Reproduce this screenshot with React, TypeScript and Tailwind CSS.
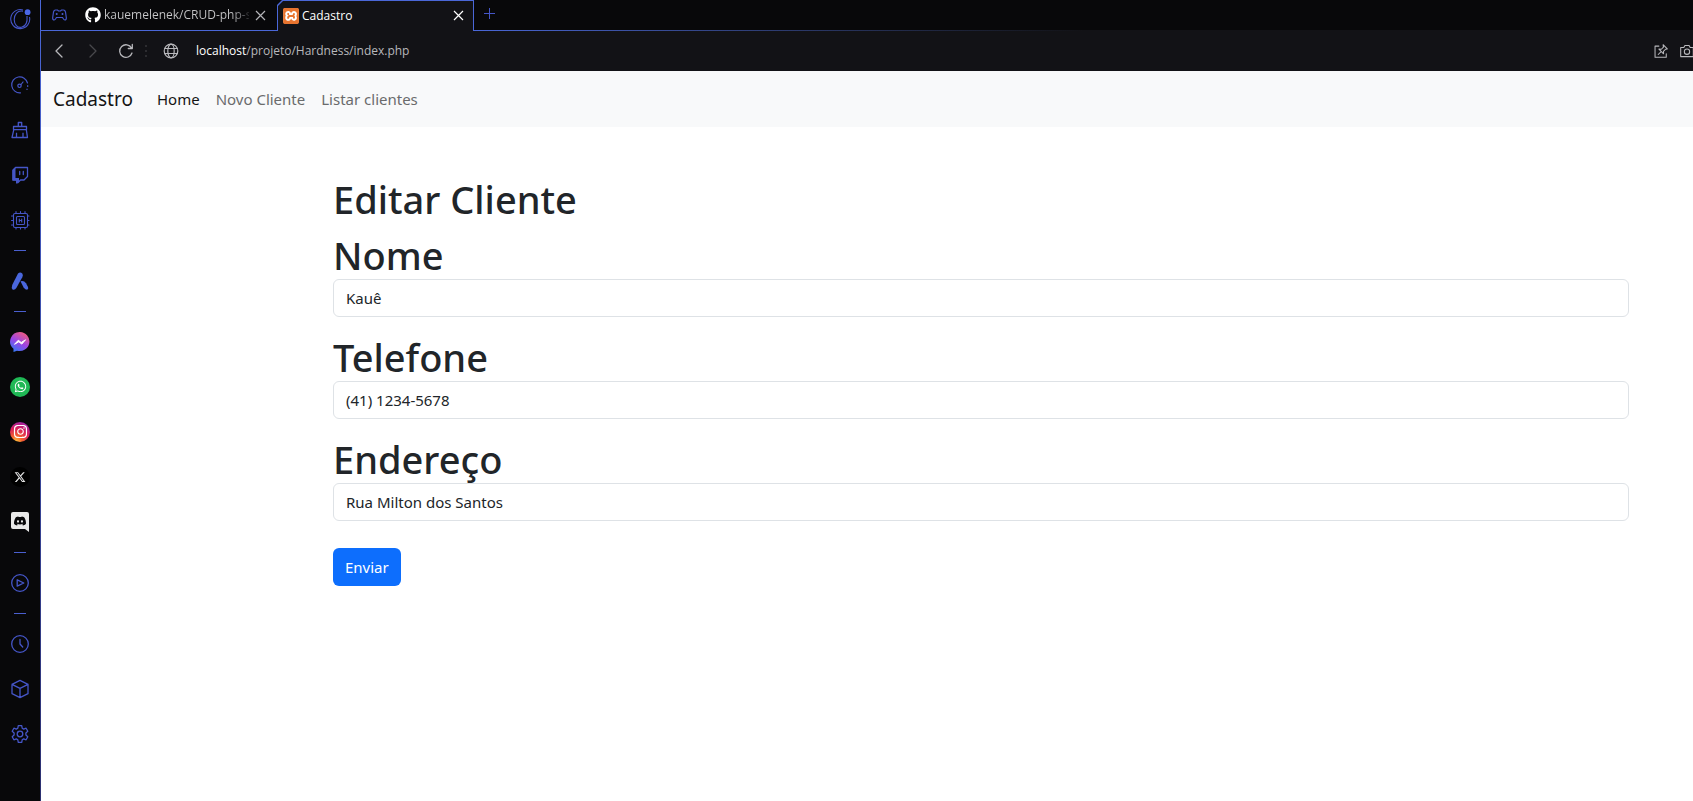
import type { ReactNode } from "react";
import { FaGithub, FaInstagram, FaWhatsapp, FaXTwitter, FaDiscord } from "react-icons/fa6";
import { SiXampp } from "react-icons/si";

function Line({ size = 20, width = 1.3, children }: { size?: number; width?: number; children: ReactNode }) {
  return (
    <svg
      width={size}
      height={size}
      viewBox="0 0 20 20"
      fill="none"
      stroke="currentColor"
      strokeWidth={width}
      strokeLinecap="round"
      strokeLinejoin="round"
      aria-hidden="true"
    >
      {children}
    </svg>
  );
}

function SideItem({ label, children }: { label: string; children: ReactNode }) {
  return (
    <button type="button" aria-label={label} className="flex h-[45px] w-full items-center justify-center">
      {children}
    </button>
  );
}

function Separator() {
  return (
    <div className="flex h-4 w-full items-center justify-center">
      <div className="h-px w-3 bg-[#4a5fd0]" />
    </div>
  );
}

function OperaLogo() {
  return (
    <svg width="22" height="22" viewBox="0 0 22 22" fill="none" stroke="currentColor" strokeWidth="1.100" aria-hidden="true">
      <path d="M14 2A9.500 9.500 0 1 0 20.500 9" />
      <path d="M14 3.200C8.500 2 5.200 6.500 5.200 11.500s3.300 8.500 7.300 7.700c5-1 6-6.200 5.500-11.200" />
      <circle cx="18.600" cy="4.200" r="2.900" fill="#4a67e8" stroke="none" />
    </svg>
  );
}

function Sidebar() {
  return (
    <aside className="flex w-10 shrink-0 flex-col items-center bg-[#08080a] text-[#4556c8]">
      <div className="flex h-[62px] w-full justify-center pt-2">
        <OperaLogo />
      </div>
      <SideItem label="GX Control">
        <Line width={1.2}>
          <path d="M10.500 17.800A8 8 0 1 1 17.500 8M17.700 10.500v1M17 14v.5" />
          <circle cx="9.500" cy="10.800" r="1.700" />
          <path d="m11 9.500 2-2.500" />
        </Line>
      </SideItem>
      <SideItem label="GX Cleaner">
        <Line>
          <path d="M8.300 6.500V2.500h3.400v4M3.500 6.500h13v3.200h-13zM3.800 9.700 2 17.500h15.500l-1.200-7.800M6.500 13.500v4M13 13.500v4" strokeLinecap="square" />
        </Line>
      </SideItem>
      <SideItem label="Twitch">
        <Line>
          <path d="M5.500 2.500h12v9L14 15h-3.500L8 17.500V15H3V5z" />
          <path d="M2.400 5.200 5.500 2.500v10.500h3.500V16l-1.500 2.500H6V15.500H2.400z" fill="currentColor" stroke="none" />
          <path d="M9.700 6.500v3M13.300 6.500v3" />
        </Line>
      </SideItem>
      <SideItem label="Monitor">
        <Line width={1.1}>
          <rect x="3.500" y="3.500" width="14" height="14" rx="1.500" />
          <rect x="6.500" y="6.500" width="8" height="8" rx="1" />
          <path d="M9.300 9v3M11.700 9v3M9.300 10.500h2.400M6 1.500v2M10.500 1.500v2M15 1.500v2M6 17.500v1.500M10.500 17.500v1.500M15 17.500v1.500M1.500 6h2M1.500 10.500h2M1.500 15h2M17.500 6h1.500M17.500 10.500h1.500M17.500 15h1.500" />
        </Line>
      </SideItem>
      <Separator />
      <SideItem label="Aria">
        <svg width="20" height="20" viewBox="0 0 20 20" fill="#4a67dd" aria-hidden="true">
          <path d="M8 2.500Q10.200.6 12.300 2.500 13.500 4 12.300 6.200L6.300 17Q5 19.300 2.500 18.500 1.200 17 2.200 14z" />
          <path d="M10.500 10.300q3.500-1 5.500 2l2 3.800q.8 2-.9 2.700-1.800 0-3.500-2.200z" />
        </svg>
      </SideItem>
      <Separator />
      <SideItem label="Messenger">
        <svg width="22" height="22" viewBox="0 0 22 22" aria-hidden="true">
          <defs>
            <linearGradient id="messenger" x1="0.15" y1="1" x2="0.7" y2="0">
              <stop offset="0" stopColor="#2b7df5" />
              <stop offset="0.5" stopColor="#9a45e6" />
              <stop offset="1" stopColor="#ef5a80" />
            </linearGradient>
          </defs>
          <path d="M11 1a10 9.500 0 1 1-3 18.700L4.500 21v-3.300A9.600 9.500 0 0 1 11 1z" fill="url(#messenger)" />
          <path d="m5.500 13.300 3.800-4.100 2.900 2.300 4.300-2.700-3.700 4.300-3-2.300z" fill="#fff" stroke="#fff" strokeWidth="1" />
        </svg>
      </SideItem>
      <SideItem label="WhatsApp">
        <span className="flex size-5 items-center justify-center rounded-full bg-[#1fb855] text-white">
          <FaWhatsapp size={13} />
        </span>
      </SideItem>
      <SideItem label="Instagram">
        <span className="flex size-5 items-center justify-center rounded-full bg-[radial-gradient(circle_at_30%_100%,#ffc93c_0%,#f5642f_25%,#d9205a_55%,#8424c9_100%)] text-white">
          <FaInstagram size={15} />
        </span>
      </SideItem>
      <SideItem label="X">
        <span className="flex size-5 items-center justify-center rounded-full bg-black text-[#e4e4e4]">
          <FaXTwitter size={12} />
        </span>
      </SideItem>
      <SideItem label="Discord">
        <svg width="20" height="22" viewBox="0 0 20 22" aria-hidden="true">
          <path d="M3 1h14a2 2 0 0 1 2 2v18l-4-3H3a2 2 0 0 1-2-2V3a2 2 0 0 1 2-2z" fill="#e9e9e9" />
          <FaDiscord x="3.500" y="3.500" size={13} color="#08080a" />
        </svg>
      </SideItem>
      <Separator />
      <SideItem label="Player">
        <Line>
          <circle cx="10" cy="10" r="8.300" />
          <path d="M7.200 6.800v6.400l6.600-3.200z" />
        </Line>
      </SideItem>
      <Separator />
      <SideItem label="Histórico">
        <Line>
          <circle cx="10" cy="10" r="8.300" />
          <path d="M10 5.500V10l2.700 3" />
        </Line>
      </SideItem>
      <SideItem label="Extensões">
        <Line>
          <path d="m10 1.300 8 4v9.400l-8 4-8-4V5.300zM2 5.300l8 4 8-4M10 9.300v9.400" />
        </Line>
      </SideItem>
      <SideItem label="Configurações">
        <Line>
          <path d="M8.300 1.700h3.400l.5 2.500 1.500.9 2.400-.9 1.700 3-1.900 1.700v2.200l1.900 1.700-1.700 3-2.400-.9-1.500.9-.5 2.500H8.300l-.5-2.500-1.500-.9-2.400.9-1.700-3 1.900-1.700V8.900L2.200 7.200l1.700-3 2.400.9 1.500-.9z" />
          <circle cx="10" cy="10" r="2.800" />
        </Line>
      </SideItem>
    </aside>
  );
}

function Close() {
  return (
    <svg width="11" height="11" viewBox="0 0 11 11" stroke="currentColor" strokeWidth="1.200" aria-hidden="true">
      <path d="m1 1 9 9M10 1l-9 9" />
    </svg>
  );
}

function TabBar() {
  return (
    <div className="flex h-[31px] bg-[#08080a] font-['Open_Sans','Noto_Sans',sans-serif] text-[12px] leading-5">
      <div className="flex w-[236px] items-center border-b border-[#4a67d8] pl-[11px]">
        <button type="button" aria-label="GX Corner" className="text-[#4556c8]">
          <svg width="15" height="12" viewBox="0 0 15 12" fill="none" stroke="currentColor" strokeWidth="1.200" aria-hidden="true">
            <path d="M3.500 1h2l1 1h2l1-1h2q1.500 0 2 2l.8 5.500Q14.500 11 12.800 11 12 11 10.500 8.500h-6Q3 11 2.200 11 .5 11 .7 8.500L1.500 3q.5-2 2-2z" />
            <path d="M3.700 5h2M4.700 4v2M9.500 5h2M10.500 4v2" />
          </svg>
        </button>
        <div className="ml-[18px] flex min-w-0 flex-1 items-center gap-[3px]">
          <FaGithub size={16} className="shrink-0 text-white" />
          <span className="w-[145px] whitespace-nowrap bg-[linear-gradient(90deg,#c6c6c8_88%,#2a2a2e)] bg-clip-text text-transparent">
            kauemelenek/CRUD-php-s
          </span>
          <button type="button" aria-label="Fechar aba" className="ml-[3px] text-[#b4b4b8]">
            <Close />
          </button>
        </div>
      </div>
      <div className="w-[197px] bg-[#4a67d8] px-px pt-px [clip-path:polygon(0_5px,5px_0,100%_0,100%_100%,0_100%)]">
        <div className="flex h-full items-center gap-[3px] bg-[#121216] pb-px pl-[5px] pr-[9px] text-white [clip-path:polygon(0_5px,5px_0,100%_0,100%_100%,0_100%)]">
          <span className="flex size-4 items-center justify-center rounded-sm bg-white text-[#e8742f]">
            <SiXampp size={16} />
          </span>
          <span className="flex-1">Cadastro</span>
          <button type="button" aria-label="Fechar aba">
            <Close />
          </button>
        </div>
      </div>
      <div className="flex flex-1 flex-col">
        <button type="button" aria-label="Nova aba" className="flex h-[30px] w-[30px] items-center justify-center pb-1 text-[#4556c8]">
          <svg width="11" height="11" viewBox="0 0 11 11" stroke="currentColor" aria-hidden="true">
            <path d="M5.500 0v11M0 5.500h11" />
          </svg>
        </button>
        <div className="h-px bg-linear-to-r from-[#4a67d8] to-[#121216] to-50%" />
      </div>
    </div>
  );
}

function AddressBar() {
  return (
    <div className="flex h-10 items-center overflow-hidden bg-[#121216] text-[#b8b8bc]">
      <button type="button" aria-label="Voltar" className="ml-2">
        <Line>
          <path d="M13 4 7 10l6 6" />
        </Line>
      </button>
      <button type="button" aria-label="Avançar" className="ml-[14px] text-[#48484c]">
        <Line>
          <path d="m7 4 6 6-6 6" />
        </Line>
      </button>
      <button type="button" aria-label="Recarregar" className="ml-[13px]">
        <Line>
          <path d="M15.500 7A6.300 6.300 0 1 0 16 12M16.300 3.500v4h-4" />
        </Line>
      </button>
      <svg width="2" height="12" viewBox="0 0 2 12" fill="#2c2c30" className="ml-[9px]" aria-hidden="true">
        <path d="M0 0h2v2H0zM0 5h2v2H0zM0 10h2v2H0z" />
      </svg>
      <span className="ml-[14px]">
        <Line width={1.200}>
          <circle cx="10" cy="10" r="6.800" />
          <ellipse cx="10" cy="10" rx="3.200" ry="6.800" />
          <path d="M3.800 7.500h12.400M3.800 12.500h12.400" />
        </Line>
      </span>
      <div className="ml-[15px] flex-1 font-['Open_Sans','Noto_Sans',sans-serif] text-[12px] leading-5">
        <span className="text-white">localhost</span>/projeto/Hardness/index.php
      </div>
      <button type="button" aria-label="Fixar" className="mr-3">
        <Line size={14} width={1.500}>
          <path d="M7 3H1.500v16h16v-5M13 1l6 6-2.500.5-3 3 .2 3.500L7 7.300l3.500.2 3-3zM10.200 10.800 6 15" />
        </Line>
      </button>
      <button type="button" aria-label="Instantâneo" className="-mr-px">
        <Line size={14} width={1.500}>
          <path d="M1 5h4.500L7 2h6l1.500 3H19v13H1z" />
          <circle cx="10" cy="11" r="3.800" />
        </Line>
      </button>
    </div>
  );
}

function Field({ id, label, value }: { id: string; label: string; value: string }) {
  return (
    <div className="mb-4">
      <label htmlFor={id} className="block text-[38px] font-medium leading-[48px]">
        {label}
      </label>
      <input
        id={id}
        name={id}
        defaultValue={value}
        className="block h-[38px] w-full rounded-md border border-[#dee2e6] bg-white px-3 text-[15px] leading-6 text-[#212529]"
      />
    </div>
  );
}

export default function App() {
  return (
    <div className="flex min-h-screen font-['Noto_Sans',sans-serif]">
      <Sidebar />
      <div className="w-px shrink-0 bg-linear-to-b from-[#4a67d8] to-[#2c3070]" />
      <div className="flex min-w-0 flex-1 flex-col bg-white">
        <TabBar />
        <AddressBar />
        <nav className="flex h-14 items-center bg-[#f8f9fa] px-3 text-[15px] leading-6 text-[#6a6b6c]">
          <a href="#" className="mr-6 text-[19px] leading-[30px] text-[#141414]">
            Cadastro
          </a>
          <div className="flex gap-4">
            <a href="#home" className="text-[#141414]">
              Home
            </a>
            <a href="#novo">Novo Cliente</a>
            <a href="#listar">Listar clientes</a>
          </div>
        </nav>
        <main className="pb-12 pl-[292px] pr-16 pt-12 text-[#212529]">
          <h1 className="mb-2 text-[38px] font-medium leading-[48px]">Editar Cliente</h1>
          <form onSubmit={(e) => e.preventDefault()}>
            <Field id="nome" label="Nome" value="Kauê" />
            <Field id="telefone" label="Telefone" value="(41) 1234-5678" />
            <Field id="endereco" label="Endereço" value="Rua Milton dos Santos" />
            <button type="submit" className="mt-[11px] h-[38px] rounded-md bg-[#0d6efd] px-3 text-[15px] leading-6 text-white">
              Enviar
            </button>
          </form>
        </main>
      </div>
    </div>
  );
}
